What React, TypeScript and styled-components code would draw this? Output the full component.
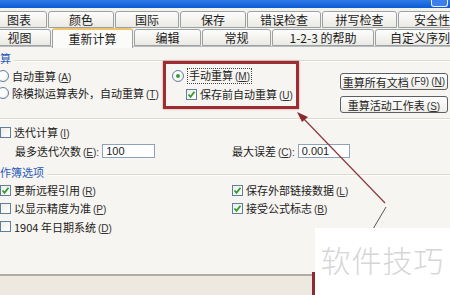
import styled, { createGlobalStyle } from "styled-components";

const GlobalStyle = createGlobalStyle`
  html, body {
    margin: 0;
    padding: 0;
    background: #f7f5f1;
  }
  * {
    box-sizing: border-box;
  }
`;

const Window = styled.div`
  position: relative;
  width: 450px;
  height: 295px;
  overflow: hidden;
  display: flex;
  flex-direction: column;
  background: #f7f5f1;
  font-family: "Noto Sans CJK SC", "Liberation Sans", sans-serif;
  font-size: 11px;
  color: #1c1c1c;
`;

const TitleBar = styled.div`
  height: 8px;
  flex-shrink: 0;
  display: flex;
  justify-content: flex-end;
  background: linear-gradient(#2f7be8, #0c5ad6);
`;

const HelpButton = styled.div`
  width: 17px;
  height: 7px;
  margin-right: 2px;
  border: 1px solid #e8efff;
  border-top: none;
  border-radius: 0 0 3px 3px;
  background: #3f7fec;
`;

const TabStrip = styled.div`
  display: flex;
  flex-direction: column;
  padding-top: 3px;
  background: #f4f2ec;
`;

const TabRow = styled.div<{ $shift: number }>`
  display: flex;
  height: ${(p) => (p.$shift < -10 ? 18 : 17)}px;
  margin-left: ${(p) => p.$shift}px;
  align-items: flex-end;
`;

const Tab = styled.div<{ $w: number; $active?: boolean }>`
  width: ${(p) => p.$w}px;
  flex-shrink: 0;
  height: ${(p) => (p.$active ? 20 : 17)}px;
  margin-right: 1px;
  display: flex;
  align-items: center;
  justify-content: center;
  border: 1px solid #9aa2a6;
  border-bottom: ${(p) => (p.$active ? "none" : "1px solid #9aa2a6")};
  border-top: ${(p) => (p.$active ? "2px solid #f2c46a" : "1px solid #9aa2a6")};
  border-radius: 3px 3px 0 0;
  background: ${(p) =>
    p.$active ? "#fbfbf9" : "linear-gradient(#fdfdfc, #ebe9e3)"};
  white-space: nowrap;
  font-size: 12px;
  line-height: 1;
  position: relative;
  z-index: ${(p) => (p.$active ? 2 : 1)};
  margin-bottom: ${(p) => (p.$active ? -2 : 0)}px;
`;

const Panel = styled.div`
  flex: 1;
  display: flex;
  flex-direction: column;
  background: #f7f5f1;
  border-top: 1px solid #b8bcbd;
`;

const GroupHeader = styled.div<{ $top: number }>`
  display: flex;
  align-items: center;
  gap: 3px;
  height: 12px;
  margin-top: ${(p) => p.$top}px;
  color: #2a59b8;
  font-size: 11px;
  line-height: 12px;
`;

const Rule = styled.div`
  flex: 1;
  height: 2px;
  margin-top: 5px;
  border-top: 1px solid #dcd9cf;
  border-bottom: 1px solid #ffffff;
`;

const CalcRow = styled.div`
  display: flex;
  align-items: flex-start;
  margin-top: -3px;
`;

const RadioColumn = styled.div`
  width: 163px;
  padding-top: 7px;
  display: flex;
  flex-direction: column;
  gap: 1px;
  margin-left: -3px;
`;

const Highlight = styled.div`
  width: 136px;
  height: 48px;
  margin-left: 3px;
  border: 3px solid #9c2d33;
  box-shadow: 0 0 2px rgba(150, 40, 40, 0.5);
  padding: 4px 0 0 6px;
  display: flex;
  flex-direction: column;
  gap: 2px;
`;

const ButtonColumn = styled.div`
  margin-left: auto;
  margin-right: 2px;
  padding-top: 12px;
  display: flex;
  flex-direction: column;
  gap: 6px;
`;

const PushButton = styled.div`
  width: 108px;
  height: 17px;
  display: flex;
  align-items: center;
  justify-content: center;
  border: 1px solid #5d5f62;
  border-radius: 3px;
  background: linear-gradient(#ffffff, #eeede7);
  white-space: nowrap;
`;

const Option = styled.div<{ $indent?: number; $h?: number; $top?: number }>`
  display: flex;
  align-items: center;
  gap: 3px;
  height: ${(p) => p.$h ?? 16}px;
  margin-top: ${(p) => p.$top ?? 0}px;
  padding-left: ${(p) => p.$indent ?? 0}px;
  white-space: nowrap;
`;

const Radio = styled.span<{ $on?: boolean }>`
  width: 12px;
  height: 12px;
  flex-shrink: 0;
  border-radius: 50%;
  border: 1px solid #5e7f9f;
  background: radial-gradient(circle at 40% 40%, #ffffff 40%, #e4e2da);
  display: flex;
  align-items: center;
  justify-content: center;
  &::after {
    content: "";
    width: 4px;
    height: 4px;
    border-radius: 50%;
    background: ${(p) => (p.$on ? "#3c9a3c" : "transparent")};
  }
`;

const Box = styled.span`
  width: 11px;
  height: 11px;
  flex-shrink: 0;
  border: 1px solid #5e7f9f;
  background: linear-gradient(135deg, #eeede6, #ffffff);
  display: flex;
  align-items: center;
  justify-content: center;
`;

const Focus = styled.span`
  border: 1px dotted #444;
  padding: 0 1px;
  line-height: 12px;
`;

const Key = styled.span`
  font-family: "Liberation Sans", sans-serif;
  font-size: 10px;
  margin-left: 2px;
  color: #333;
  u {
    text-decoration: underline;
  }
`;

const Divider = styled.div`
  height: 2px;
  margin-top: 5px;
  border-top: 1px solid #dcd9cf;
  border-bottom: 1px solid #ffffff;
`;

const FieldRow = styled.div`
  display: flex;
  align-items: center;
  height: 15px;
  margin-top: 3px;
`;

const Field = styled.div<{ $left: number; $input: number }>`
  display: flex;
  align-items: center;
  width: ${(p) => p.$left}px;
  padding-left: ${(p) => p.$input}px;
  white-space: nowrap;
`;

const TextBox = styled.div<{ $w: number }>`
  width: ${(p) => p.$w}px;
  height: 14px;
  margin-left: 3px;
  border: 1px solid #8ea3ba;
  background: #ffffff;
  padding-left: 3px;
  font-family: "Liberation Sans", sans-serif;
  font-size: 11px;
  line-height: 12px;
`;

const OptionsGrid = styled.div`
  display: grid;
  grid-template-columns: 232px 1fr;
  margin-top: 3px;
`;

const OptionColumn = styled.div`
  display: flex;
  flex-direction: column;
`;

const Footer = styled.div`
  height: 21px;
  flex-shrink: 0;
  border-top: 2px solid #aeaca5;
  background: #ede9e1;
`;

const Annotation = styled.svg`
  position: absolute;
  left: 0;
  top: 0;
  pointer-events: none;
`;

const Watermark = styled.div`
  position: absolute;
  left: 315px;
  top: 228px;
  width: 135px;
  height: 67px;
  background: #ffffff;
  display: flex;
  align-items: center;
  justify-content: center;
  padding-bottom: 6px;
  color: #d6d6d6;
  font-size: 30px;
  font-weight: 300;
  letter-spacing: 1px;
`;

const RedStub = styled.div`
  position: absolute;
  left: 312px;
  top: 272px;
  width: 3px;
  height: 23px;
  background: #8e2b2f;
`;

const Check = () => (
  <svg width="9" height="9" viewBox="0 0 9 9">
    <polyline
      points="1.5,4.5 3.5,6.8 7.5,1.8"
      fill="none"
      stroke="#2f9a2f"
      strokeWidth="1.8"
    />
  </svg>
);

const row1 = [
  { label: "图表", w: 56 },
  { label: "颜色", w: 66 },
  { label: "国际", w: 64 },
  { label: "保存", w: 66 },
  { label: "错误检查", w: 74 },
  { label: "拼写检查", w: 75 },
  { label: "安全性", w: 68 },
];

const row2 = [
  { label: "视图", w: 63 },
  { label: "重新计算", w: 81, active: true },
  { label: "编辑", w: 67 },
  { label: "常规", w: 69 },
  { label: "1-2-3 的帮助", w: 102 },
  { label: "自定义序列", w: 90 },
];

const Label = ({ text, k, colon }: { text: string; k: string; colon?: boolean }) => (
  <span>
    {text}
    <Key>
      (<u>{k}</u>){colon ? ":" : ""}
    </Key>
  </span>
);

const App = () => {
  return (
    <Window>
      <GlobalStyle />
      <TitleBar>
        <HelpButton />
      </TitleBar>
      <TabStrip>
        <TabRow $shift={-9}>
          {row1.map((t) => (
            <Tab key={t.label} $w={t.w}>
              {t.label}
            </Tab>
          ))}
        </TabRow>
        <TabRow $shift={-12}>
          {row2.map((t) => (
            <Tab key={t.label} $w={t.w} $active={t.active}>
              {t.label}
            </Tab>
          ))}
        </TabRow>
      </TabStrip>
      <Panel>
        <GroupHeader $top={5}>
          算<Rule />
        </GroupHeader>
        <CalcRow>
          <RadioColumn>
            <Option>
              <Radio />
              <Label text="自动重算" k="A" />
            </Option>
            <Option>
              <Radio />
              <Label text="除模拟运算表外，自动重算" k="T" />
            </Option>
          </RadioColumn>
          <Highlight>
            <Option>
              <Radio $on />
              <Focus>
                <Label text="手动重算" k="M" />
              </Focus>
            </Option>
            <Option $indent={14}>
              <Box>
                <Check />
              </Box>
              <Label text="保存前自动重算" k="U" />
            </Option>
          </Highlight>
          <ButtonColumn>
            <PushButton>
              重算所有文档<Key>(F9)</Key>
              <Key>
                (<u>N</u>)
              </Key>
            </PushButton>
            <PushButton>
              <Label text="重算活动工作表" k="S" />
            </PushButton>
          </ButtonColumn>
        </CalcRow>
        <Divider />
        <Option $h={16} $top={4}>
          <Box />
          <Label text="迭代计算" k="I" />
        </Option>
        <FieldRow>
          <Field $left={232} $input={15}>
            <Label text="最多迭代次数" k="E" colon />
            <TextBox $w={53}>100</TextBox>
          </Field>
          <Field $left={218} $input={0}>
            <Label text="最大误差" k="C" colon />
            <TextBox $w={52}>0.001</TextBox>
          </Field>
        </FieldRow>
        <GroupHeader $top={8}>
          作簿选项<Rule />
        </GroupHeader>
        <OptionsGrid>
          <OptionColumn>
            <Option $h={18}>
              <Box>
                <Check />
              </Box>
              <Label text="更新远程引用" k="R" />
            </Option>
            <Option $h={18}>
              <Box />
              <Label text="以显示精度为准" k="P" />
            </Option>
            <Option $h={19}>
              <Box />
              <Label text="1904 年日期系统" k="D" />
            </Option>
          </OptionColumn>
          <OptionColumn>
            <Option $h={18}>
              <Box>
                <Check />
              </Box>
              <Label text="保存外部链接数据" k="L" />
            </Option>
            <Option $h={18}>
              <Box>
                <Check />
              </Box>
              <Label text="接受公式标志" k="B" />
            </Option>
          </OptionColumn>
        </OptionsGrid>
      </Panel>
      <Footer />
      <Annotation width="450" height="295" viewBox="0 0 450 295">
        <line x1="385" y1="203" x2="302" y2="117" stroke="#8a3a3c" strokeWidth="1.2" />
        <polygon points="297,112 308,117 302,122" fill="#8a2a30" />
        <line x1="386" y1="207" x2="373" y2="229" stroke="#555" strokeWidth="1" />
      </Annotation>
      <RedStub />
      <Watermark>软件技巧</Watermark>
    </Window>
  );
};

export default App;
